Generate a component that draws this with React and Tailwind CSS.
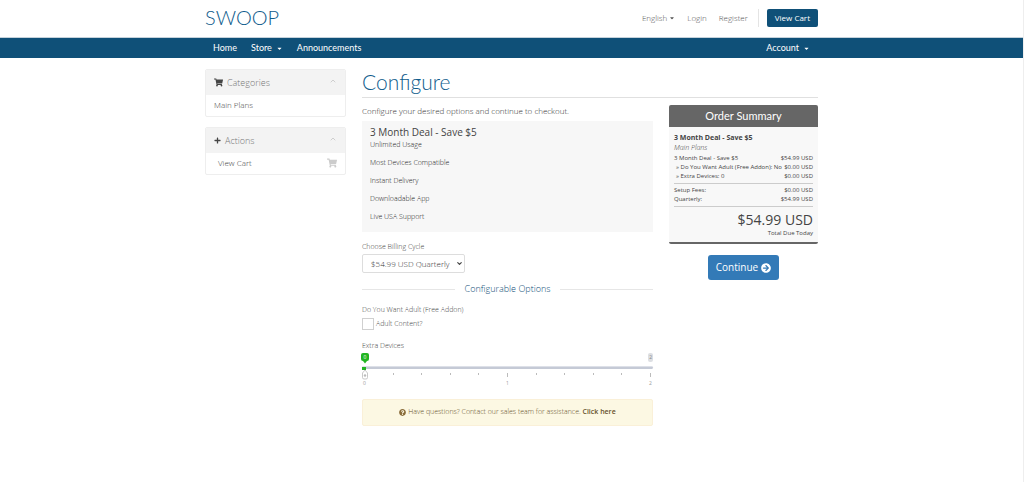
import React, { useState } from "react";
import { FaShoppingCart, FaPlus, FaQuestionCircle, FaArrowCircleRight, FaCaretDown } from "react-icons/fa";
import { ChevronUp, ChevronDown } from "lucide-react";

const features = [
    "Unlimited Usage",
    "Most Devices Compatible",
    "Instant Delivery",
    "Downloadable App",
    "Live USA Support",
];

const ticks = [0, 1, 2, 3, 4, 5, 6, 7, 8, 9, 10];

const Panel = ({ icon, title, children }) => (
    <section className="overflow-hidden rounded-xs border border-[#eeeeee] bg-white">
        <h3 className="flex h-[25px] items-center gap-1 bg-[#f3f3f3] px-2 text-[9px] leading-3 font-light text-[#777777]">
            <span className="text-[#444444]">{icon}</span>
            <span className="grow">{title}</span>
            <ChevronUp className="mb-1 size-2 text-[#bbbbbb]" />
        </h3>
        {children}
    </section>
);

const SummaryRow = ({ label, price, indent }) => (
    <div className={`flex justify-between whitespace-nowrap ${indent ? "pl-[2px]" : ""}`}>
        <span>{label}</span>
        <span>{price}</span>
    </div>
);

const App = () => {
    const [adult, setAdult] = useState(false);
    const [devices, setDevices] = useState(0);

    return (
        <div className="min-h-screen border-r border-[#eeeeee] bg-white font-['Open_Sans',sans-serif] text-[#444444]">
            <header className="mx-auto flex h-[37px] max-w-[613px] items-center justify-between pb-[2px]">
                <a href="#" className="pb-[2px] font-['Lato',sans-serif] text-[20px] font-light leading-none text-[#0f5c8c]">SWOOP</a>
                <div className="flex items-center text-[8px] leading-[10px] font-light text-[#555555]">
                    <button className="mr-3 flex items-center gap-[2px]">
                        English <FaCaretDown className="size-[6px]" />
                    </button>
                    <a href="#" className="mr-3">Login</a>
                    <a href="#">Register</a>
                    <span className="mx-2 ml-[10px] h-[18px] border-l border-[#e4e4e4]"></span>
                    <button className="h-[18px] rounded-xs bg-[#0f5078] px-2 font-normal text-white">View Cart</button>
                </div>
            </header>

            <nav className="border-t border-[#c5d2db] bg-[#0f5078] font-['Lato',sans-serif] text-white">
                <div className="mx-auto flex h-5 max-w-[613px] items-center gap-[14px] px-2 text-[9px]">
                    <a href="#">Home</a>
                    <button className="flex items-center gap-1">Store <FaCaretDown className="size-[7px]" /></button>
                    <a href="#">Announcements</a>
                    <button className="ml-auto flex items-center gap-1">Account <FaCaretDown className="size-[7px]" /></button>
                </div>
            </nav>

            <div className="mx-auto flex max-w-[613px] items-start gap-4 pt-[11px]">
                <aside className="flex w-[141px] flex-col gap-[10px]">
                    <Panel icon={<FaShoppingCart className="size-[9px]" />} title="Categories">
                        <a href="#" className="flex h-[21px] items-center px-2 pb-[2px] text-[8px] leading-[10px] font-light">Main Plans</a>
                    </Panel>
                    <Panel icon={<FaPlus className="size-[7px]" />} title="Actions">
                        <a href="#" className="flex h-[21px] items-center justify-between px-2 pb-[2px] pl-3 text-[8px] leading-[10px] font-light">
                            View Cart
                            <FaShoppingCart className="size-[10px] text-[#cccccc]" />
                        </a>
                    </Panel>
                </aside>

                <main className="min-w-0 grow">
                    <h1 className="h-[29px] border-b border-[#e0e0e0] font-['Lato',sans-serif] text-[21px] leading-[26px] font-light text-[#0f5c8c]">Configure</h1>

                    <div className="mt-[7px] flex items-start gap-4">
                        <form className="min-w-0 grow" onSubmit={(e) => e.preventDefault()}>
                            <p className="text-[8px] leading-3 font-light text-[#333333]">Configure your desired options and continue to checkout.</p>

                            <div className="mt-1 bg-[#f7f7f7] px-2 pt-1 pb-[10px]">
                                <h2 className="text-[10px] leading-[15px]">3 Month Deal - Save $5</h2>
                                <ul className="flex flex-col gap-2 text-[7px] leading-[10px] font-light text-[#222222]">
                                    {features.map((item) => (
                                        <li key={item}>{item}</li>
                                    ))}
                                </ul>
                            </div>

                            <label htmlFor="cycle" className="mt-[10px] block text-[7px] leading-[10px] font-light">Choose Billing Cycle</label>
                            <div className="relative mt-[2px] w-[103px]">
                                <select id="cycle" className="block h-[19px] w-full appearance-none rounded-xs border border-[#dddddd] bg-white pl-2 text-[8px] leading-3 font-light text-[#333333]">
                                    <option>$54.99 USD Quarterly</option>
                                </select>
                                <ChevronDown strokeWidth={4} className="pointer-events-none absolute top-[6px] right-[2px] size-[7px]" />
                            </div>

                            <div className="mt-[10px] flex items-center gap-[10px] text-[9px] leading-3 font-light text-[#0f5078]">
                                <span className="grow border-t border-[#e6e6e6]"></span>
                                Configurable Options
                                <span className="grow border-t border-[#e6e6e6]"></span>
                            </div>

                            <p className="mt-[10px] text-[7px] leading-[10px] font-light">Do You Want Adult (Free Addon)</p>
                            <label className="mt-[3px] flex items-center gap-[2px] text-[7px] leading-3 font-light">
                                <input
                                    type="checkbox"
                                    checked={adult}
                                    onChange={(e) => setAdult(e.target.checked)}
                                    className="size-3 appearance-none border border-[#d0d0d0] bg-white checked:bg-[#0f5078]"
                                />
                                Adult Content?
                            </label>

                            <label htmlFor="devices" className="mt-[11px] block text-[7px] leading-[10px] font-light">Extra Devices</label>
                            <div className="relative mt-[2px] h-[34px] text-[5px] leading-none">
                                <div className="flex h-[10px] items-start justify-end">
                                    <span className="rounded-xs bg-[#dddfe3] px-[1px] py-[2px] text-[#888888]">2</span>
                                </div>
                                <input
                                    id="devices"
                                    type="range"
                                    min="0"
                                    max="2"
                                    value={devices}
                                    onChange={(e) => setDevices(+e.target.value)}
                                    className="mt-[3px] block h-[3px] w-full appearance-none rounded-full border-t border-[#dde0e8] bg-[#c5cad6] [&::-webkit-slider-thumb]:h-[3px] [&::-webkit-slider-thumb]:w-1 [&::-webkit-slider-thumb]:appearance-none [&::-webkit-slider-thumb]:bg-[#22b422]"
                                />
                                <div className="flex justify-between px-[2px] pt-1 text-[#999999]">
                                    {ticks.map((tick) => (
                                        <span key={tick} className="flex w-[1px] flex-col items-center gap-1">
                                            <i className={`w-[1px] bg-[#bbbbbb] ${tick % 5 === 0 ? "h-1" : "h-[2px]"}`}></i>
                                            {tick % 5 === 0 && <span>{tick / 5}</span>}
                                        </span>
                                    ))}
                                </div>
                                <div className="pointer-events-none absolute inset-y-0 right-[7px] left-[-1px]">
                                    <div className="absolute top-0" style={{ left: `${devices * 50}%` }}>
                                        <span className="flex h-2 w-2 items-center justify-center rounded-xs bg-[#22b422] text-white">{devices}</span>
                                        <svg viewBox="0 0 8 24" className="h-6 w-2">
                                            <path d="M2 0h4L4 2.500z" fill="#22b422" />
                                            <path d="M4 9 6.500 12v4.500Q6.500 18 5 18H3Q1.500 18 1.500 16.500V12z" fill="#fff" stroke="#bbb" strokeWidth="0.800" />
                                            <circle cx="4" cy="14.500" r="1.200" fill="#bbb" />
                                        </svg>
                                    </div>
                                </div>
                            </div>

                            <div className="mt-3 flex h-[27px] items-center justify-center gap-[2px] rounded-xs border border-[#faf0d8] bg-[#fcf8e3] text-[7px] font-light text-[#66512c]">
                                <FaQuestionCircle className="size-[7px] text-[#8a6d3b]" />
                                <span>Have questions? Contact our sales team for assistance. <a href="#" className="font-semibold">Click here</a></span>
                            </div>
                        </form>

                        <aside className="w-[149px] shrink-0">
                            <section className="overflow-hidden rounded-xs border-b-2 border-[#666666] bg-[#f8f8f8] text-[6px] leading-[9px]">
                                <h2 className="bg-[#666666] text-center font-['Lato',sans-serif] text-[11px] leading-[22px] text-white">Order Summary</h2>
                                <div className="px-[5px] pt-[6px] pb-1">
                                    <h3 className="text-[7px] leading-[10px] font-bold">3 Month Deal - Save $5</h3>
                                    <p className="text-[7px] font-light italic">Main Plans</p>
                                    <div className="mt-[2px] border-b border-[#cccccc] pb-[2px]">
                                        <SummaryRow label="3 Month Deal - Save $5" price="$54.99 USD" />
                                        <SummaryRow indent label={`» Do You Want Adult (Free Addon): ${adult ? "Yes" : "No"}`} price="$0.00 USD" />
                                        <SummaryRow indent label={`» Extra Devices: ${devices}`} price="$0.00 USD" />
                                    </div>
                                    <div className="border-b border-[#cccccc] py-[2px]">
                                        <SummaryRow label="Setup Fees:" price="$0.00 USD" />
                                        <SummaryRow label="Quarterly:" price="$54.99 USD" />
                                    </div>
                                    <p className="pt-1 text-right text-[14px] leading-[18px]">$54.99 USD</p>
                                    <p className="text-right">Total Due Today</p>
                                </div>
                            </section>
                            <button className="mx-auto mt-[11px] flex h-[25px] items-center gap-[3px] rounded-[3px] bg-[#337ab7] px-2 text-[10px] text-white">
                                Continue <FaArrowCircleRight />
                            </button>
                        </aside>
                    </div>
                </main>
            </div>
        </div>
    );
};

export default App;
